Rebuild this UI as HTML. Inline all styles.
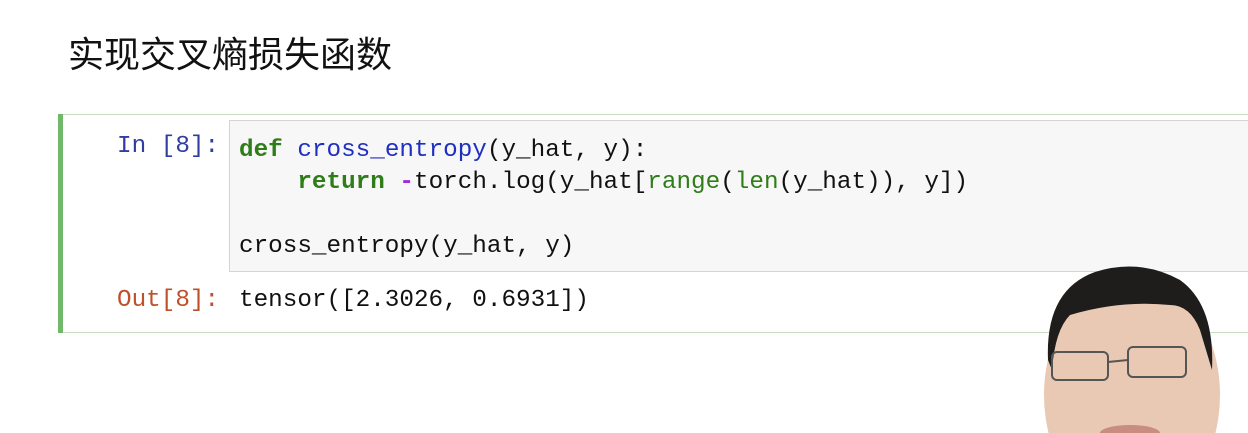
<!DOCTYPE html>
<html><head><meta charset="utf-8"><style>
html,body{margin:0;width:1248px;height:433px;overflow:hidden}
body{background:#fff;position:relative;font-family:"Liberation Mono",monospace}
.t{position:absolute;left:68px;top:26px;font:36px "Liberation Sans","Noto Sans CJK SC",sans-serif;color:#111}
.cell{position:absolute;left:58px;top:114px;width:1200px;height:217px;border-top:1px solid #c8dcc0;border-bottom:1px solid #c8dcc0;}
.bar{position:absolute;left:58px;top:114px;width:5px;height:219px;background:#72b86a}
.inp{position:absolute;left:229px;top:120px;width:1030px;height:150px;background:#f7f7f7;border:1px solid #d4d4d4}
.c{position:absolute;font-size:24.3px;line-height:32px;white-space:pre;color:#111}
.k{color:#2f7d18;font-weight:bold}.f{color:#1f2fc0}.b{color:#2f7d18}.o{color:#a626e0;font-weight:bold}
</style></head><body>
<div class="t">实现交叉熵损失函数</div>
<div class="cell"></div><div class="bar"></div>
<div class="inp"></div>
<div class="c" style="left:117px;top:131px;color:#303f9f">In [8]:</div>
<div class="c" style="left:239px;top:135px"><span class="k">def</span> <span class="f">cross_entropy</span>(y_hat, y):
    <span class="k">return</span> <span class="o">-</span>torch.log(y_hat[<span class="b">range</span>(<span class="b">len</span>(y_hat)), y])

cross_entropy(y_hat, y)</div>
<div class="c" style="left:117px;top:285px;color:#c0502a">Out[8]:</div>
<div class="c" style="left:239px;top:285px">tensor([2.3026, 0.6931])</div>
<svg style="position:absolute;left:0;top:0;display:block" width="1248" height="433">
<ellipse cx="1132" cy="395" rx="88" ry="120" fill="#e9c9b4"/>
<path d="M1048 360 Q1045 290 1095 272 Q1140 258 1180 280 Q1215 305 1212 370 L1200 330 Q1190 305 1170 305 Q1120 300 1070 315 Q1055 330 1052 370Z" fill="#1f1d1c"/>
<rect x="1052" y="352" width="56" height="28" rx="5" fill="none" stroke="#555" stroke-width="2"/>
<rect x="1128" y="347" width="58" height="30" rx="5" fill="none" stroke="#555" stroke-width="2"/>
<path d="M1108 362 L1128 360" stroke="#555" stroke-width="2"/>
<ellipse cx="1130" cy="433" rx="30" ry="8" fill="#c98c80"/>
</svg>
</body></html>
